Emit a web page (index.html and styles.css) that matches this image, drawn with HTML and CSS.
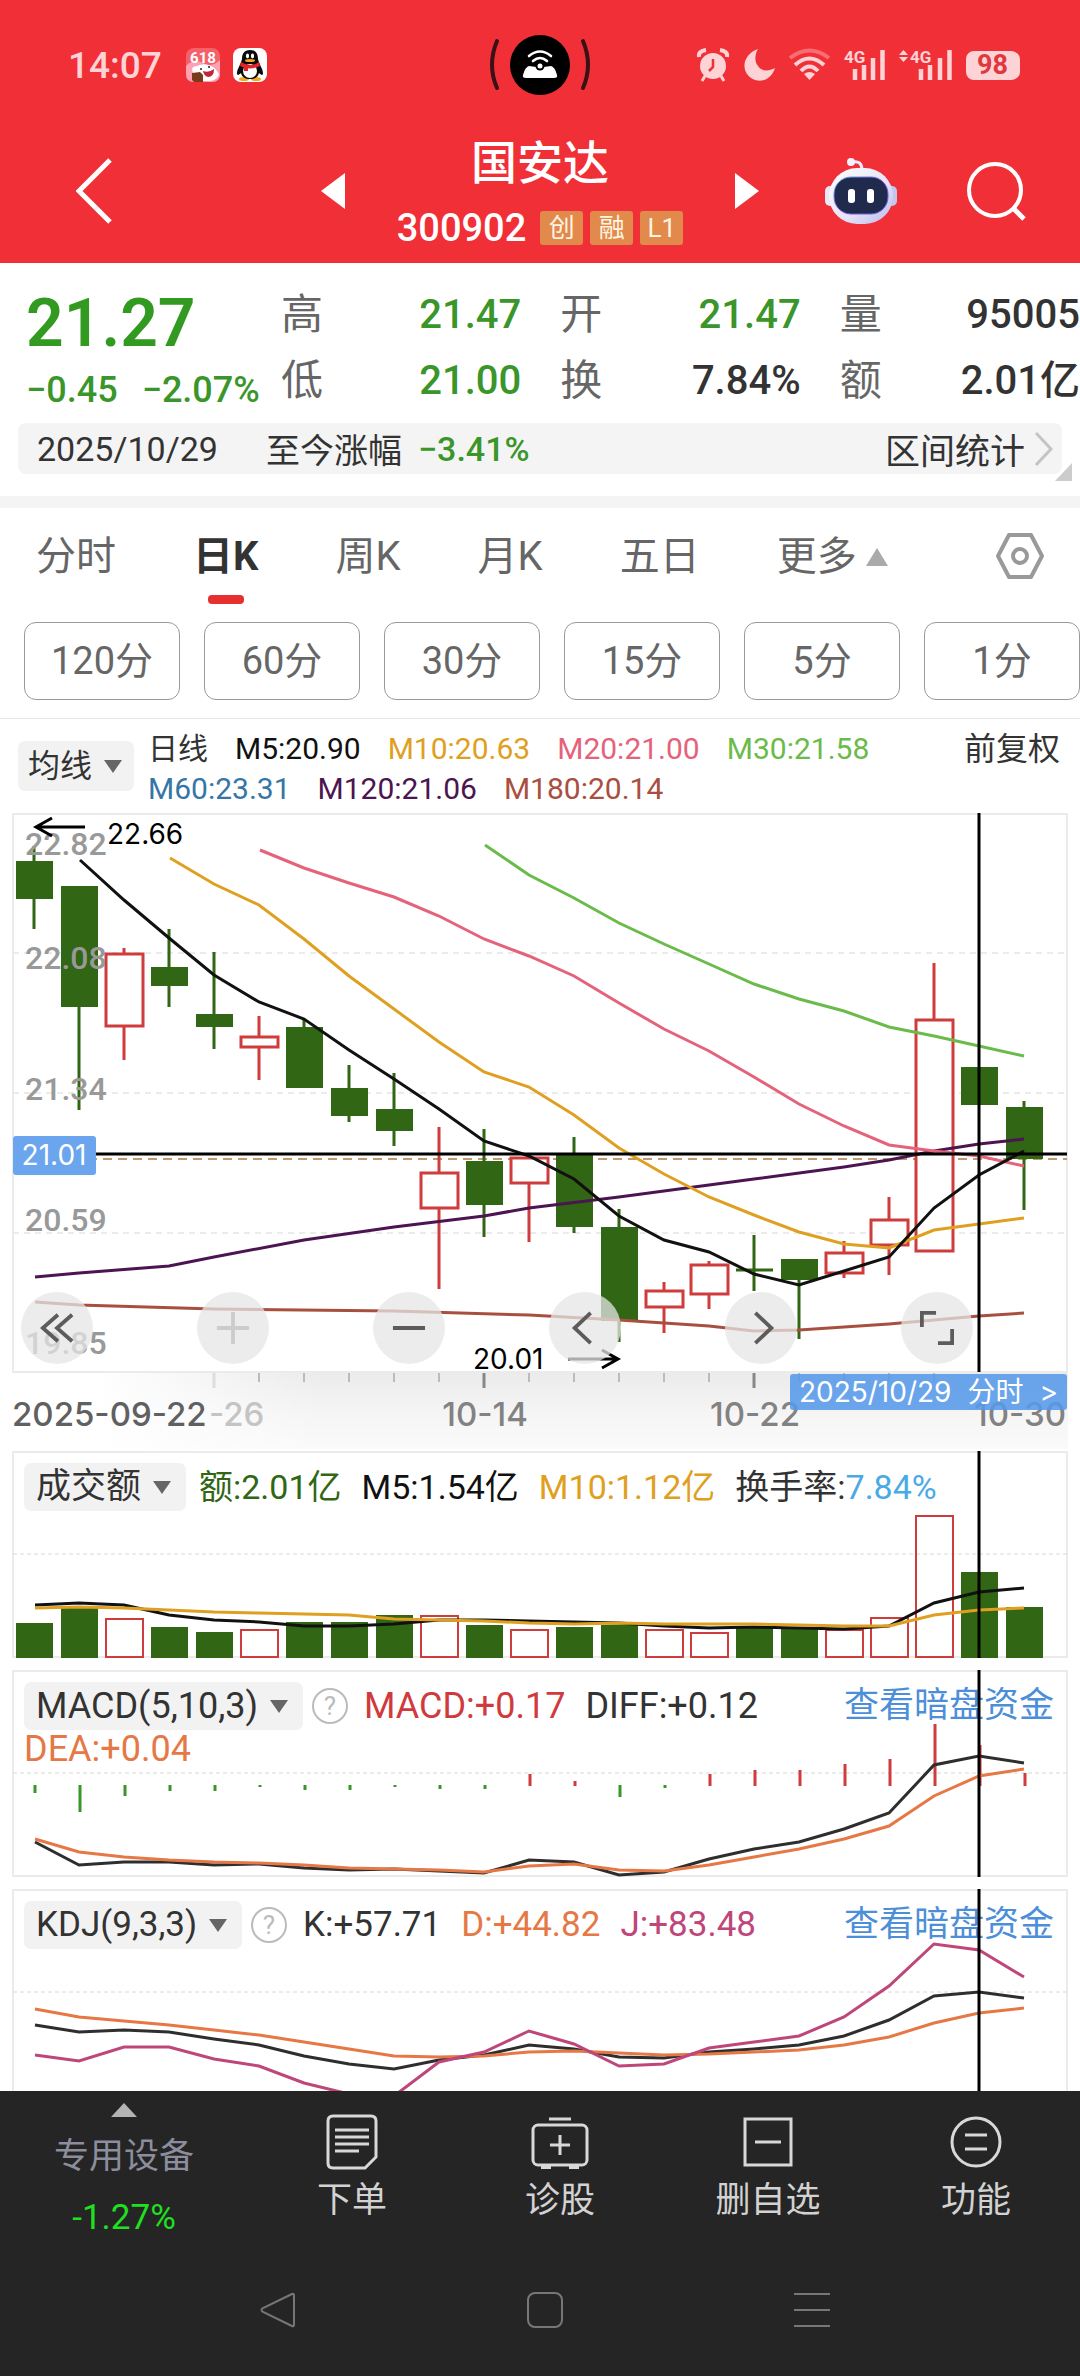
FILE: index.html
```html
<!DOCTYPE html>
<html lang="zh-CN">
<head>
    <meta charset="UTF-8">
    <meta name="viewport" content="width=device-width, initial-scale=1.0">
    <title>国安达 300902</title>
    <link rel="stylesheet" href="styles.css">
</head>
<body>

    <header class="top">
        <!-- Status bar -->
        <div class="status-bar">
            <div class="status-left">
                <span class="clock">14:07</span>
                <svg width="34" height="34" viewBox="0 0 34 34">
                    <rect width="34" height="34" rx="8" fill="#f4616b"/>
                    <path d="M0 18 Q8 10 17 15 T34 12 V26 Q34 34 26 34 H8 Q0 34 0 26 Z" fill="#fba3b4"/>
                    <text x="17" y="15" class="app-618" text-anchor="middle">618</text>
                    <path d="M7 25 Q4 18 11 18 Q19 14 27 19 Q32 23 33 27 Q30 33 22 33 H13 Q7 31 7 25 Z" fill="#fff"/>
                    <path d="M17 23 Q23 25 28 21 Q28 29 22 29 Q18 28 17 23 Z" fill="#c42336"/>
                    <circle cx="15" cy="21" r="1" fill="#222"/>
                    <circle cx="23" cy="19" r="1" fill="#222"/>
                    <path d="M6 25 L14 24 L17 27 V34 H8 L6 32 Z" fill="#7a3b1d"/>
                </svg>
                <svg width="34" height="34" viewBox="0 0 34 34">
                    <rect width="34" height="34" rx="8" fill="#fff"/>
                    <ellipse cx="11" cy="31" rx="5" ry="2" fill="#f5a81c"/>
                    <ellipse cx="23" cy="31" rx="5" ry="2" fill="#f5a81c"/>
                    <path d="M17 2 C11 2 9 6 9 11 C8 16 4 21 4 25 C4 28 6 27 8 25 C9 29 12 31 17 31 C22 31 25 29 26 25 C28 27 30 28 30 25 C30 21 26 16 25 11 C25 6 23 2 17 2 Z" fill="#0b0b0b"/>
                    <ellipse cx="17" cy="23" rx="7" ry="7" fill="#fff"/>
                    <path d="M8 14 Q17 20 26 14 L27 18 Q17 23 7 18 Z" fill="#e4232b"/>
                    <path d="M11 18 H15 V23 H11 Z" fill="#e4232b"/>
                    <ellipse cx="14.5" cy="8" rx="1.6" ry="2.4" fill="#fff"/>
                    <ellipse cx="19.5" cy="8" rx="1.6" ry="2.4" fill="#fff"/>
                    <ellipse cx="17" cy="12.5" rx="5" ry="1.5" fill="#f5a81c"/>
                </svg>
            </div>
            <svg width="104" height="60" viewBox="0 0 104 60">
                <path d="M9 6 Q-1 30 9 53 M95 6 Q105 30 95 53" fill="none" stroke="#3a1216" stroke-width="4" stroke-linecap="round"/>
                <circle cx="52" cy="30" r="30" fill="#000"/>
                <path d="M41 31 Q52 33 63 31 Q67 32 69 40 Q70 43 66 43 H38 Q34 43 35 40 Q37 32 41 31 Z" fill="#fff"/>
                <circle cx="52" cy="31" r="4.5" fill="#000"/>
                <circle cx="52" cy="31" r="2.5" fill="#fff"/>
                <path d="M45 26 Q52 20 59 26 M41 21 Q52 12 63 21" fill="none" stroke="#fff" stroke-width="2.6" stroke-linecap="round"/>
            </svg>
            <div class="status-right">
                <svg width="32" height="34" viewBox="0 0 32 34">
                    <circle cx="16" cy="18" r="13" fill="currentColor"/>
                    <path d="M2 9 Q1 3 9 2 M30 9 Q31 3 23 2" fill="none" stroke="currentColor" stroke-width="4"/>
                    <path d="M8 28 L5 33 M24 28 L27 33" stroke="currentColor" stroke-width="3"/>
                    <path d="M16 11 V19 L12 23" fill="none" stroke="#f12f37" stroke-width="2.5"/>
                </svg>
                <svg width="32" height="32" viewBox="0 0 32 32">
                    <path d="M15 0 C3 4 -2 16 4 25 C12 36 28 33 32 19 C25 23 18 22 15 17 C11 12 12 5 15 0 Z" fill="currentColor"/>
                </svg>
                <svg width="41" height="32" viewBox="0 0 41 32">
                    <path d="M1 9 Q20.5 -6 40 9" fill="none" stroke="#f76d73" stroke-width="4"/>
                    <path d="M6 16 Q20.5 3 35 16 M12 22 Q20.5 13 29 22" fill="none" stroke="currentColor" stroke-width="4"/>
                    <path d="M15 25 Q20.5 21 26 25 L20.5 31 Z" fill="currentColor"/>
                </svg>
                <svg width="41" height="32" viewBox="0 0 41 32">
                    <text x="0" y="14" class="net">4G</text>
                    <path d="M11 20 V31 M20 16 V31 M29 9 V31 M38.5 1 V31" stroke="currentColor" stroke-width="4.5"/>
                </svg>
                <svg width="53" height="32" viewBox="0 0 53 32">
                    <path d="M0 6 L4.5 1 L9 6 Z M0 8 L4.5 13 L9 8 Z" fill="currentColor"/>
                    <text x="11" y="14" class="net">4G</text>
                    <path d="M22 20 V31 M31 16 V31 M41 9 V31 M50.5 1 V31" stroke="currentColor" stroke-width="4.5"/>
                </svg>
                <span class="battery">98</span>
            </div>
        </div>

        <!-- Title bar -->
        <div class="title-bar">
            <button type="button" class="icon-btn back" aria-label="返回">
                <svg width="36" height="66" viewBox="0 0 36 66"><path d="M34 2 L3 33 L34 64" fill="none" stroke="#fff" stroke-width="5"/></svg>
            </button>
            <div class="stock-switch">
                <button type="button" class="icon-btn" aria-label="上一只">
                    <svg width="24" height="36" viewBox="0 0 24 36"><path d="M24 0 V36 L0 18 Z" fill="#fff"/></svg>
                </button>
                <div class="stock">
                    <h1>国安达</h1>
                    <div class="code-row">
                        <span class="code">300902</span>
                        <span class="badge">创</span>
                        <span class="badge">融</span>
                        <span class="badge">L1</span>
                    </div>
                </div>
                <button type="button" class="icon-btn" aria-label="下一只">
                    <svg width="24" height="36" viewBox="0 0 24 36"><path d="M0 0 V36 L24 18 Z" fill="#fff"/></svg>
                </button>
            </div>
            <div class="actions">
                <button type="button" class="icon-btn" aria-label="智能助手">
                    <svg width="72" height="66" viewBox="0 0 72 66">
                        <defs>
                            <linearGradient id="shell" x1="0" y1="0" x2="1" y2="1">
                                <stop offset="0" stop-color="#ffffff"/>
                                <stop offset="0.6" stop-color="#e3e2f7"/>
                                <stop offset="1" stop-color="#b9b8ea"/>
                            </linearGradient>
                            <linearGradient id="rim" x1="0" y1="0" x2="1" y2="1">
                                <stop offset="0" stop-color="#5fc3ee"/>
                                <stop offset="0.5" stop-color="#8b4be0"/>
                                <stop offset="1" stop-color="#5b6be8"/>
                            </linearGradient>
                        </defs>
                        <path d="M27 4 Q37 2 37 12" fill="none" stroke="#ecebfa" stroke-width="3"/>
                        <circle cx="26" cy="4" r="4" fill="#f4f3fd"/>
                        <rect x="0" y="28" width="10" height="20" rx="5" fill="#e9e8fa"/>
                        <rect x="62" y="28" width="10" height="20" rx="5" fill="#c4c6ee"/>
                        <rect x="4" y="10" width="64" height="56" rx="28" fill="url(#shell)"/>
                        <rect x="9" y="19" width="54" height="37" rx="17" fill="#1f2a4d" stroke="url(#rim)" stroke-width="1"/>
                        <rect x="23" y="31" width="7" height="14" rx="3" fill="#fff"/>
                        <rect x="42" y="31" width="7" height="14" rx="3" fill="#fff"/>
                    </svg>
                </button>
                <button type="button" class="icon-btn" aria-label="搜索">
                    <svg width="60" height="60" viewBox="0 0 60 60"><circle cx="29" cy="29" r="26" fill="none" stroke="#fff" stroke-width="4"/><path d="M47 47 L58 58" stroke="#fff" stroke-width="5"/></svg>
                </button>
            </div>
        </div>
    </header>

    <main>
        <!-- Quote -->
        <section class="quote">
            <div class="last">
                <div class="price">21.27</div>
                <div class="change"><span>−0.45</span><span>−2.07%</span></div>
            </div>
            <dl class="stats">
                <div><dt>高</dt><dd class="down">21.47</dd></div>
                <div><dt>开</dt><dd class="down">21.47</dd></div>
                <div><dt>量</dt><dd>95005</dd></div>
                <div><dt>低</dt><dd class="down">21.00</dd></div>
                <div><dt>换</dt><dd>7.84%</dd></div>
                <div><dt>额</dt><dd>2.01亿</dd></div>
            </dl>
        </section>

        <div class="range">
            <span class="range-date">2025/10/29</span>
            <span>至今涨幅</span>
            <span class="down">−3.41%</span>
            <a href="#" class="range-link">区间统计
                <svg width="20" height="36" viewBox="0 0 20 36"><path d="M2 2 L17 18 L2 34" fill="none" stroke="#c4c4c4" stroke-width="3"/></svg>
            </a>
            <span class="corner"></span>
        </div>

        <!-- Period tabs -->
        <nav class="tabs">
            <button type="button">分时</button>
            <button type="button" class="active">日K</button>
            <button type="button">周K</button>
            <button type="button">月K</button>
            <button type="button">五日</button>
            <button type="button" class="more">更多</button>
            <button type="button" class="settings" aria-label="设置">
                <svg width="48" height="48" viewBox="0 0 48 48"><path d="M13 3 H35 L46 24 L35 45 H13 L2 24 Z" fill="none" stroke="#999" stroke-width="4" stroke-linejoin="round"/><circle cx="24" cy="24" r="7" fill="none" stroke="#999" stroke-width="4"/></svg>
            </button>
        </nav>

        <div class="minutes">
            <button type="button">120分</button>
            <button type="button">60分</button>
            <button type="button">30分</button>
            <button type="button">15分</button>
            <button type="button">5分</button>
            <button type="button">1分</button>
        </div>

        <!-- Moving averages -->
        <div class="ma-bar">
            <label class="chip chip-small"><select aria-label="主图指标"><option>均线</option></select></label>
            <div class="ma-list">
                <span>日线</span>
                <span class="m5">M5:20.90</span>
                <span class="m10">M10:20.63</span>
                <span class="m20">M20:21.00</span>
                <span class="m30">M30:21.58</span>
                <span class="m60">M60:23.31</span>
                <span class="m120">M120:21.06</span>
                <span class="m180">M180:20.14</span>
            </div>
            <a href="#" class="adjust">前复权</a>
        </div>

        <!-- Daily K chart -->
        <section class="kline">
            <svg class="chart" viewBox="0 10 1080 639">
                <defs>
                    <linearGradient id="axisShade" x1="0" y1="0" x2="0" y2="1">
                        <stop offset="0" stop-color="#ebebeb"/>
                        <stop offset="0.6" stop-color="#f6f6f6"/>
                        <stop offset="1" stop-color="#fafafa"/>
                    </linearGradient>
                    <linearGradient id="axisFade" x1="0" y1="0" x2="1" y2="0">
                        <stop offset="0" stop-color="#fff"/>
                        <stop offset="0.3" stop-color="#fff"/>
                        <stop offset="1" stop-color="#fff" stop-opacity="0"/>
                    </linearGradient>
                </defs>
                <rect x="0" y="572" width="1068" height="77" fill="url(#axisShade)"/>
                <rect x="0" y="572" width="320" height="77" fill="url(#axisFade)"/>
                <path class="frame" d="M13 14 H1067 V572 H13 Z"/>
                <path class="grid" d="M13 153 H1067 M13 293 H1067 M13 433 H1067"/>
                <path class="now" d="M13 359 H1067"/>

                <!-- wicks and bodies -->
                <path class="wick-down" d="M34 46 V129 M79 86 V310 M169 129 V207 M214 152 V249 M304 219 V288 M349 265 V322 M394 273 V346 M484 329 V437 M574 337 V433 M619 409 V542 M754 435 V491 M799 459 V539 M979 267 V305 M1024 301 V410 M736 470 H773"/>
                <path class="body-down" d="M16 61 h37 v38 h-37 z M61 86 h37 v121 h-37 z M151 167 h37 v19 h-37 z M196 214 h37 v13 h-37 z M286 227 h37 v61 h-37 z M331 288 h37 v28 h-37 z M376 309 h37 v22 h-37 z M466 361 h37 v44 h-37 z M556 354 h37 v73 h-37 z M601 427 h37 v94 h-37 z M781 459 h37 v21 h-37 z M961 267 h37 v38 h-37 z M1006 307 h37 v52 h-37 z"/>
                <path class="wick-up" d="M124 148 V154 M124 226 V260 M259 216 V237 M259 247 V280 M439 327 V373 M439 408 V489 M529 383 V442 M664 482 V491 M664 507 V533 M709 461 V465 M709 494 V509 M844 441 V453 M844 473 V478 M889 397 V420 M889 445 V475 M934 163 V220"/>
                <path class="body-up" d="M106 154 h37 v72 h-37 z M241 237 h37 v10 h-37 z M421 373 h37 v35 h-37 z M511 358 h37 v25 h-37 z M646 491 h37 v16 h-37 z M691 465 h37 v29 h-37 z M826 453 h37 v20 h-37 z M871 420 h37 v25 h-37 z M916 220 h37 v231 h-37 z"/>

                <polyline class="line m180" points="35,502 79,505 214,509 394,511 529,515 619,520 709,526 754,531 799,530 889,524 979,516 1024,513"/>
                <polyline class="line m120" points="35,477 79,473 169,466 214,457 304,440 394,427 484,416 529,408 619,397 754,379 844,367 889,360 934,351 979,344 1024,339"/>
                <polyline class="line m30" points="485,45 529,75 574,98 619,123 664,144 709,164 754,184 799,199 844,211 889,227 934,236 979,246 1024,256"/>
                <polyline class="line m20" points="260,50 304,68 349,83 394,97 439,116 484,139 529,156 574,176 619,203 664,229 709,251 754,277 799,304 844,326 889,345 934,351 979,356 1024,366"/>
                <polyline class="line m10" points="170,58 214,84 259,105 304,139 349,176 394,209 439,242 484,272 529,287 574,315 619,348 664,374 709,397 754,415 799,432 844,444 889,448 934,430 979,424 1024,418"/>
                <polyline class="line m5" points="80,60 124,100 169,138 214,175 259,202 304,219 349,250 394,279 439,309 484,341 529,356 574,379 619,416 664,440 709,452 754,474 799,485 844,471 889,457 934,408 979,375 1024,351"/>

                <g class="price-axis">
                    <text x="25" y="55">22.82</text>
                    <text x="25" y="169">22.08</text>
                    <text x="25" y="300">21.34</text>
                    <text x="25" y="431">20.59</text>
                    <text x="25" y="554">19.85</text>
                </g>

                <!-- high and low marks -->
                <path class="mark-arrow" d="M85 27 H36 M52 18 L36 27 L52 36 M568 559 H618 M602 550 L618 559 L602 568"/>
                <text class="mark" x="107" y="44">22.66</text>
                <text class="mark" x="473" y="569">20.01</text>

                <!-- date axis -->
                <path class="tick" d="M259 573 V582 M304 573 V582 M349 573 V582 M394 573 V582 M439 573 V582 M529 573 V582 M574 573 V582 M619 573 V582 M664 573 V582 M709 573 V582 M799 573 V582 M844 573 V582 M889 573 V582 M934 573 V582"/>
                <path class="tick tick-light" d="M214 573 V588"/>
                <path class="tick tick-major" d="M484 573 V588 M754 573 V588"/>
                <g class="date-axis">
                    <text x="12" y="626" class="first">2025-09-22</text>
                    <text x="209" y="626" class="faded">-26</text>
                    <text x="485" y="626" text-anchor="middle">10-14</text>
                    <text x="755" y="626" text-anchor="middle">10-22</text>
                    <text x="1066" y="626" text-anchor="end">10-30</text>
                </g>

                <path class="cross" d="M13 354 H1067 M979 13 V572"/>
                <rect x="13" y="336" width="83" height="39" rx="3" fill="#6aa5ee"/>
                <text class="cross-price" x="54" y="365" text-anchor="middle">21.01</text>
            </svg>
            <div class="tools">
                <button type="button" aria-label="最左"><svg viewBox="0 0 36 36"><path d="M19 4 L3 18 L19 32 M34 4 L18 18 L34 32"/></svg></button>
                <button type="button" aria-label="放大" disabled><svg viewBox="0 0 36 36"><path d="M18 1 V35 M1 18 H35"/></svg></button>
                <button type="button" aria-label="缩小"><svg viewBox="0 0 36 36"><path d="M1 18 H35"/></svg></button>
                <button type="button" aria-label="左移"><svg viewBox="0 0 36 36"><path d="M24 2 L7 18 L24 34"/></svg></button>
                <button type="button" aria-label="右移"><svg viewBox="0 0 36 36"><path d="M12 2 L29 18 L12 34"/></svg></button>
                <button type="button" aria-label="全屏"><svg viewBox="0 0 36 36"><path d="M17 2 H2 V17 M19 34 H34 V19"/></svg></button>
            </div>
            <a href="#" class="day-link"><span>2025/10/29</span><span>分时</span><span>&gt;</span></a>
        </section>

        <!-- Turnover -->
        <section class="panel turnover">
            <div class="panel-head">
                <div class="values">
                    <label class="chip"><select aria-label="副图指标一"><option>成交额</option></select></label>
                    <span class="vol">额:2.01亿</span>
                    <span class="m5">M5:1.54亿</span>
                    <span class="m10">M10:1.12亿</span>
                    <span>换手率:<span class="rate">7.84%</span></span>
                </div>
            </div>
            <svg class="chart" viewBox="0 19 1080 215">
                <path class="frame" d="M13 22 H1067 V227 H13 Z"/>
                <path class="grid thin" d="M13 124 H1067"/>
                <path class="body-down" d="M16 193 h37 v35 h-37 z M61 178 h37 v50 h-37 z M151 197 h37 v31 h-37 z M196 202 h37 v26 h-37 z M286 192 h37 v36 h-37 z M331 192 h37 v36 h-37 z M376 185 h37 v43 h-37 z M466 195 h37 v33 h-37 z M556 197 h37 v31 h-37 z M601 195 h37 v33 h-37 z M736 197 h37 v31 h-37 z M781 198 h37 v30 h-37 z M961 142 h37 v86 h-37 z M1006 177 h37 v51 h-37 z"/>
                <path class="body-up thin" d="M106 189 h37 v38 h-37 z M241 200 h37 v27 h-37 z M421 186 h37 v41 h-37 z M511 200 h37 v27 h-37 z M646 200 h37 v27 h-37 z M691 203 h37 v24 h-37 z M826 200 h37 v27 h-37 z M871 188 h37 v39 h-37 z M916 86 h37 v141 h-37 z"/>
                <polyline class="line m5" points="35,175 79,173 124,175 169,185 214,190 259,192 304,196 349,196 394,194 439,190 484,190 529,191 574,192 619,193 664,196 709,198 754,197 799,198 844,199 889,196 934,173 979,162 1024,158"/>
                <polyline class="line m10" points="35,178 79,177 124,178 169,180 214,182 259,183 304,184 349,185 394,189 439,190 484,191 529,193 574,194 619,193 664,194 709,194 754,194 799,195 844,196 889,196 934,185 979,180 1024,178"/>
                <path class="cross" d="M979 21 V228"/>
            </svg>
        </section>

        <!-- MACD -->
        <section class="panel macd-panel">
            <div class="panel-head">
                <div class="values">
                    <label class="chip"><select aria-label="副图指标二"><option>MACD(5,10,3)</option></select></label>
                    <button type="button" class="help">?</button>
                    <span class="macd">MACD:+0.17</span>
                    <span>DIFF:+0.12</span>
                    <span class="dea">DEA:+0.04</span>
                </div>
                <a href="#" class="dark-pool">查看暗盘资金</a>
            </div>
            <svg class="chart" viewBox="0 8 1080 215">
                <path class="frame" d="M13 11 H1067 V216 H13 Z"/>
                <path class="grid thin" d="M13 113 H1067"/>
                <path class="hist-down" d="M35 125 V133 M80 125 V152 M125 125 V136 M170 125 V131 M215 125 V131 M260 125 V127 M305 125 V130 M350 125 V130 M395 125 V127 M440 125 V129 M485 125 V129 M620 125 V137 M665 125 V128"/>
                <path class="hist-up" d="M530 126 V114 M575 126 V121 M710 126 V114 M755 126 V110 M800 126 V110 M845 126 V104 M890 126 V99 M935 126 V64 M980 126 V85 M1025 126 V113"/>
                <polyline class="line diff" points="35,182 79,205 124,202 169,202 214,205 259,204 304,208 349,210 394,209 439,211 484,213 529,200 574,202 619,215 664,212 709,199 754,189 799,182 844,169 889,153 934,105 979,96 1024,103"/>
                <polyline class="line dea" points="35,179 79,192 124,197 169,200 214,202 259,203 304,205 349,208 394,209 439,210 484,212 529,206 574,204 619,210 664,211 709,205 754,197 799,189 844,179 889,166 934,136 979,116 1024,109"/>
                <path class="cross" d="M979 10 V217"/>
            </svg>
        </section>

        <!-- KDJ -->
        <section class="panel">
            <div class="panel-head">
                <div class="values">
                    <label class="chip"><select aria-label="副图指标三"><option>KDJ(9,3,3)</option></select></label>
                    <button type="button" class="help">?</button>
                    <span>K:+57.71</span>
                    <span class="dea">D:+44.82</span>
                    <span class="kdj-j">J:+83.48</span>
                </div>
                <a href="#" class="dark-pool">查看暗盘资金</a>
            </div>
            <svg class="chart" viewBox="0 7 1080 204">
                <path class="frame" d="M13 212 V10 H1067 V212"/>
                <path class="grid thin" d="M13 112 H1067"/>
                <polyline class="line diff" points="35,145 79,152 124,150 169,152 214,159 259,165 304,176 349,184 394,189 439,180 484,175 529,165 574,169 619,177 664,178 709,172 754,169 799,165 844,156 889,140 934,116 979,112 1024,118"/>
                <polyline class="line dea" points="35,129 79,137 124,141 169,145 214,150 259,155 304,162 349,169 394,176 439,177 484,176 529,172 574,171 619,173 664,175 709,174 754,172 799,170 844,165 889,157 934,143 979,133 1024,128"/>
                <polyline class="line kdj-j" points="35,175 79,181 124,167 169,167 214,179 259,186 304,203 349,214 394,216 439,182 484,172 529,151 574,164 619,186 664,184 709,168 754,162 799,156 844,137 889,106 934,64 979,70 1024,97"/>
                <path class="cross" d="M979 9 V212"/>
            </svg>
        </section>
    </main>

    <footer class="bottom">
        <nav class="bottom-nav">
            <a href="#" class="sector">
                <span class="sector-name">专用设备</span>
                <span class="sector-change">-1.27%</span>
            </a>
            <a href="#">
                <svg width="58" height="58" viewBox="0 0 58 58"><path d="M10 3 H48 Q53 3 53 8 V44 L42 55 H10 Q5 55 5 50 V8 Q5 3 10 3 Z"/><path d="M12 17 H46 M12 24 H46 M12 31 H46 M12 38 H36"/></svg>
                下单
            </a>
            <a href="#">
                <svg width="58" height="58" viewBox="0 0 58 58"><path d="M18 6 H40"/><rect x="2" y="12" width="54" height="40" rx="5"/><path d="M29 22 V42 M19 32 H39"/><path d="M10 54 H20 M38 54 H48" stroke-width="4"/></svg>
                诊股
            </a>
            <a href="#">
                <svg width="58" height="58" viewBox="0 0 58 58"><rect x="6" y="6" width="46" height="46"/><path d="M16 29 H42"/></svg>
                删自选
            </a>
            <a href="#">
                <svg width="58" height="58" viewBox="0 0 58 58"><circle cx="29" cy="29" r="24"/><path d="M18 22 H40 M18 36 H40"/></svg>
                功能
            </a>
        </nav>
        <div class="system-nav">
            <button type="button" aria-label="返回"><svg width="36" height="36" viewBox="0 0 36 36"><path d="M32 2 Q34 1 34 4 V32 Q34 35 32 34 L3 20 Q0 18 3 16 Z"/></svg></button>
            <button type="button" aria-label="主页"><svg width="36" height="36" viewBox="0 0 36 36"><rect x="1" y="1" width="34" height="34" rx="7"/></svg></button>
            <button type="button" aria-label="任务"><svg width="36" height="36" viewBox="0 0 36 36"><path d="M0 2 H36 M0 18 H36 M0 34 H36"/></svg></button>
        </div>
    </footer>

</body>
</html>
```
FILE: styles.css
```css
* {
    box-sizing: border-box;
}

body {
    margin: 0;
    font-family: Roboto, "Noto Sans CJK SC", sans-serif;
    font-size: 35px;
    color: #333;
    background-color: #fff;
}

button,
select {
    margin: 0;
    padding: 0;
    border: none;
    background: none;
    font: inherit;
    color: inherit;
}

a {
    color: inherit;
    text-decoration: none;
}

svg {
    display: block;
}

/* Header */
.top {
    background-color: #f12f37;
    color: #fff;
}

.status-bar {
    display: grid;
    grid-template-columns: 1fr auto 1fr;
    align-items: center;
    height: 130px;
    padding: 0 61px 0 68px;
    color: #fdd3d5;
}

.status-bar > svg {
    margin-right: 7px;
}

.status-left {
    display: flex;
    align-items: center;
    gap: 13px;
}

.clock {
    margin-right: 11px;
    font-size: 37px;
    font-weight: 500;
}

.app-618 {
    font-size: 15px;
    font-weight: 700;
    fill: #fff;
}

.status-right {
    display: flex;
    align-items: center;
    justify-content: flex-end;
    gap: 14px;
}

.status-right svg {
    overflow: visible;
}

.net {
    font-size: 17px;
    font-weight: 700;
    fill: currentColor;
}

.battery {
    width: 53px;
    border-radius: 8px;
    background-color: #fdd3d5;
    color: #e0383f;
    font-size: 27px;
    font-weight: 700;
    line-height: 29px;
    text-align: center;
    box-shadow: 2px 0 0 -1px #fdd3d5;
}

.title-bar {
    display: grid;
    grid-template-columns: 1fr auto 1fr;
    height: 133px;
    padding: 0 54px;
}

.icon-btn {
    display: flex;
    align-items: center;
    height: 122px;
}

.back {
    margin-left: 22px;
}

.stock-switch {
    display: flex;
    gap: 52px;
}

.stock h1 {
    margin: 0;
    font-size: 46px;
    font-weight: 500;
    line-height: 66px;
    text-align: center;
}

.code-row {
    display: flex;
    align-items: center;
    gap: 7px;
    line-height: 64px;
}

.code {
    margin-right: 7px;
    font-size: 38px;
    font-weight: 500;
}

.badge {
    width: 43px;
    border-radius: 3px;
    background-color: #e18a4b;
    color: #fff3e2;
    font-size: 26px;
    line-height: 34px;
    text-align: center;
}

.actions {
    display: flex;
    justify-content: flex-end;
    gap: 69px;
}

/* Quote */
.quote {
    display: grid;
    grid-template-columns: 255px 1fr;
    padding: 17px 0 0 26px;
    white-space: nowrap;
}

.price {
    color: #339a21;
    font-size: 66px;
    font-weight: 600;
    line-height: 88px;
}

.change {
    display: flex;
    gap: 24px;
    color: #3a962a;
    font-size: 36px;
    font-weight: 500;
    line-height: 44px;
}

.stats {
    display: grid;
    grid-template-columns: 1fr 1fr 1fr;
    column-gap: 39px;
    margin: 2px 0 0;
    line-height: 66px;
}

.stats div {
    display: flex;
    justify-content: space-between;
}

.stats dt {
    color: #666;
    font-size: 42px;
}

.stats dd {
    margin: 0;
    font-size: 40px;
    font-weight: 500;
}

.down,
.stats .down {
    color: #3a962a;
    font-weight: 500;
}

.range {
    position: relative;
    display: flex;
    align-items: center;
    height: 51px;
    margin: 9px 18px 22px;
    padding: 0 8px 0 19px;
    border-radius: 8px;
    background-color: #f4f4f4;
    font-size: 34px;
}

.range-date {
    margin-right: 48px;
}

.range .down {
    margin-left: 16px;
}

.range-link {
    display: flex;
    align-items: center;
    gap: 9px;
    margin-left: auto;
    font-size: 35px;
}

.corner {
    position: absolute;
    right: -10px;
    bottom: -7px;
    border-left: 17px solid transparent;
    border-bottom: 18px solid #ccc;
}

/* Tabs */
.tabs {
    display: flex;
    align-items: flex-start;
    gap: 77px;
    height: 126px;
    padding: 24px 36px 0;
    border-top: 12px solid #f4f4f4;
    color: #666;
    font-size: 40px;
    line-height: 50px;
}

.tabs .active {
    color: #333;
    font-weight: 700;
}

.active::after {
    content: "";
    display: block;
    width: 36px;
    height: 9px;
    margin: 13px auto 0;
    border-radius: 4px;
    background-color: #e5302f;
}

.more {
    display: flex;
    align-items: center;
    gap: 9px;
}

.more::after {
    content: "";
    border: 11px solid transparent;
    border-top: none;
    border-bottom: 18px solid #aaa;
}

.settings {
    margin-left: auto;
}

.minutes {
    display: grid;
    grid-template-columns: repeat(6, 1fr);
    gap: 24px;
    padding: 0 0 18px 24px;
}

.minutes button {
    height: 78px;
    border: 1px solid #999;
    border-radius: 12px;
    color: #666;
    font-size: 38px;
    line-height: 74px;
}

/* Indicator bars */
.chip {
    display: flex;
    align-items: center;
    gap: 11px;
    height: 48px;
    padding: 0 15px 0 12px;
    border-radius: 7px;
    background-color: #f2f2f2;
}

.chip::after {
    content: "";
    border: 9px solid transparent;
    border-bottom: none;
    border-top: 13px solid #666;
}

.chip select {
    appearance: none;
}

.ma-bar {
    display: flex;
    align-items: flex-start;
    padding: 10px 20px 1px 18px;
    border-top: 1px solid #e6e6e6;
    font-size: 30px;
    line-height: 40px;
}

.chip-small {
    height: 50px;
    margin: 12px 14px 0 0;
    padding: 0 12px 0 10px;
    font-size: 32px;
}

.ma-list {
    flex: 1;
    display: flex;
    flex-wrap: wrap;
    column-gap: 27px;
    max-width: 760px;
}

.adjust {
    margin-left: auto;
    font-size: 32px;
}

.m5 { color: #111; }
.m10 { color: #dfa021; }
.m20 { color: #e5637a; }
.m30 { color: #6abb49; }
.m60 { color: #3576a6; }
.m120 { color: #4c1450; }
.m180 { color: #a8503f; }
.macd { color: #d13a3c; }
.diff { color: #2e2e2e; }
.dea { color: #e57845; }
.kdj-j { color: #bf467a; }
.vol { color: #306614; }
.rate { color: #4aaae6; }

/* Charts */
.chart {
    width: 100%;
    height: auto;
}

.chart path,
.line {
    fill: none;
}

.line {
    stroke: currentColor;
    stroke-width: 3;
}

.chart .frame { stroke: #ebebeb; stroke-width: 2; }
.chart .grid { stroke: #ebebeb; stroke-width: 2; stroke-dasharray: 6 5; }
.chart .grid.thin { stroke: #d8d8d8; stroke-width: 1; stroke-dasharray: 4 3; }
.chart .now { stroke: #c39a6e; stroke-width: 2; stroke-dasharray: 9 6; }
.chart .wick-down { stroke: #306614; stroke-width: 3; }
.chart .body-down { fill: #306614; }
.chart .wick-up { stroke: #cf3c3c; stroke-width: 3; }
.chart .body-up { stroke: #cf3c3c; stroke-width: 3; fill: #fff; }
.chart .body-up.thin { stroke-width: 2; }
.chart .hist-down { stroke: #3a962a; stroke-width: 3; }
.chart .hist-up { stroke: #cf3c3c; stroke-width: 3; }
.chart .cross { stroke: #000; stroke-width: 3; }
.chart .mark-arrow { stroke: #000; stroke-width: 3; }
.chart .tick { stroke: #bbb; stroke-width: 2; }
.chart .tick-light { stroke: #ddd; stroke-width: 3; }
.chart .tick-major { stroke: #888; stroke-width: 3; }

.price-axis {
    fill: #999;
    font-size: 32px;
    font-weight: 500;
}

.mark,
.cross-price {
    font-family: Inter, sans-serif;
    font-size: 28px;
}

.cross-price {
    fill: #fff;
}

.date-axis {
    fill: #828282;
    font-family: Inter, sans-serif;
    font-size: 33px;
    font-weight: 500;
}

.date-axis .first { fill: #606060; }
.date-axis .faded { fill: #c4c4c4; }

.kline {
    position: relative;
}

.tools {
    position: absolute;
    left: 21px;
    right: 107px;
    bottom: 85px;
    display: flex;
    justify-content: space-between;
}

.tools button {
    display: flex;
    align-items: center;
    justify-content: center;
    width: 72px;
    height: 72px;
    border-radius: 50%;
    background-color: rgba(230, 230, 230, 0.75);
}

.tools svg {
    width: 34px;
    height: 34px;
    fill: none;
    stroke: #5c5c5c;
    stroke-width: 4;
}

.tools button:disabled svg {
    stroke: #ccc;
}

.day-link {
    position: absolute;
    right: 13px;
    bottom: 39px;
    display: flex;
    gap: 16px;
    padding: 0 9px;
    border-radius: 3px;
    background-color: rgba(86, 154, 234, 0.88);
    color: #fff;
    font-family: Inter, "Noto Sans CJK SC", sans-serif;
    font-size: 28px;
    line-height: 36px;
}

/* The header row and the chart share one grid cell */
.panel {
    display: grid;
}

.panel + .panel {
    margin-top: 4px;
}

.panel > * {
    grid-area: 1 / 1;
}

.panel-head {
    display: flex;
    justify-content: space-between;
    align-items: flex-start;
    padding: 14px 26px 0 24px;
    line-height: 48px;
}

.panel .chart {
    z-index: 1;
    pointer-events: none;
}

.values {
    display: flex;
    flex-wrap: wrap;
    align-items: center;
}

.values > span {
    margin-right: 20px;
}

.values .dea {
    line-height: 38px;
}

.values .chip {
    margin-right: 9px;
}

.turnover .values {
    font-size: 34px;
}

.turnover .chip {
    margin-right: 13px;
    font-size: 35px;
}

.macd-panel .values {
    font-size: 36px;
}

.help {
    width: 36px;
    height: 36px;
    margin-right: 16px;
    border: 2px solid #bbb;
    border-radius: 50%;
    color: #bbb;
    font-size: 26px;
    line-height: 32px;
}

.dark-pool {
    flex: none;
    color: #4c8fd8;
    white-space: nowrap;
}

.panel .body-up {
    fill: none;
}

/* Bottom */
.bottom {
    background-color: #252525;
    color: #d2d2d2;
}

.bottom-nav {
    display: grid;
    grid-template-columns: 248px repeat(4, 1fr);
    height: 153px;
}

.bottom-nav a {
    display: flex;
    flex-direction: column;
    align-items: center;
    padding-top: 22px;
    line-height: 59px;
}

.bottom-nav svg {
    fill: none;
    stroke: #d8d8d8;
    stroke-width: 3;
}

.bottom-nav .sector {
    padding-top: 12px;
}

.sector::before {
    content: "";
    border: 13px solid transparent;
    border-top: none;
    border-bottom: 14px solid #b4b4b4;
}

.sector-name {
    margin-top: 10px;
    color: #8c8e9e;
}

.sector-change {
    color: #20e020;
    line-height: 64px;
}

.system-nav {
    display: flex;
    justify-content: space-between;
    height: 132px;
    padding: 0 250px 0 260px;
}

.system-nav svg {
    fill: none;
    stroke: #777;
    stroke-width: 2;
}
```
